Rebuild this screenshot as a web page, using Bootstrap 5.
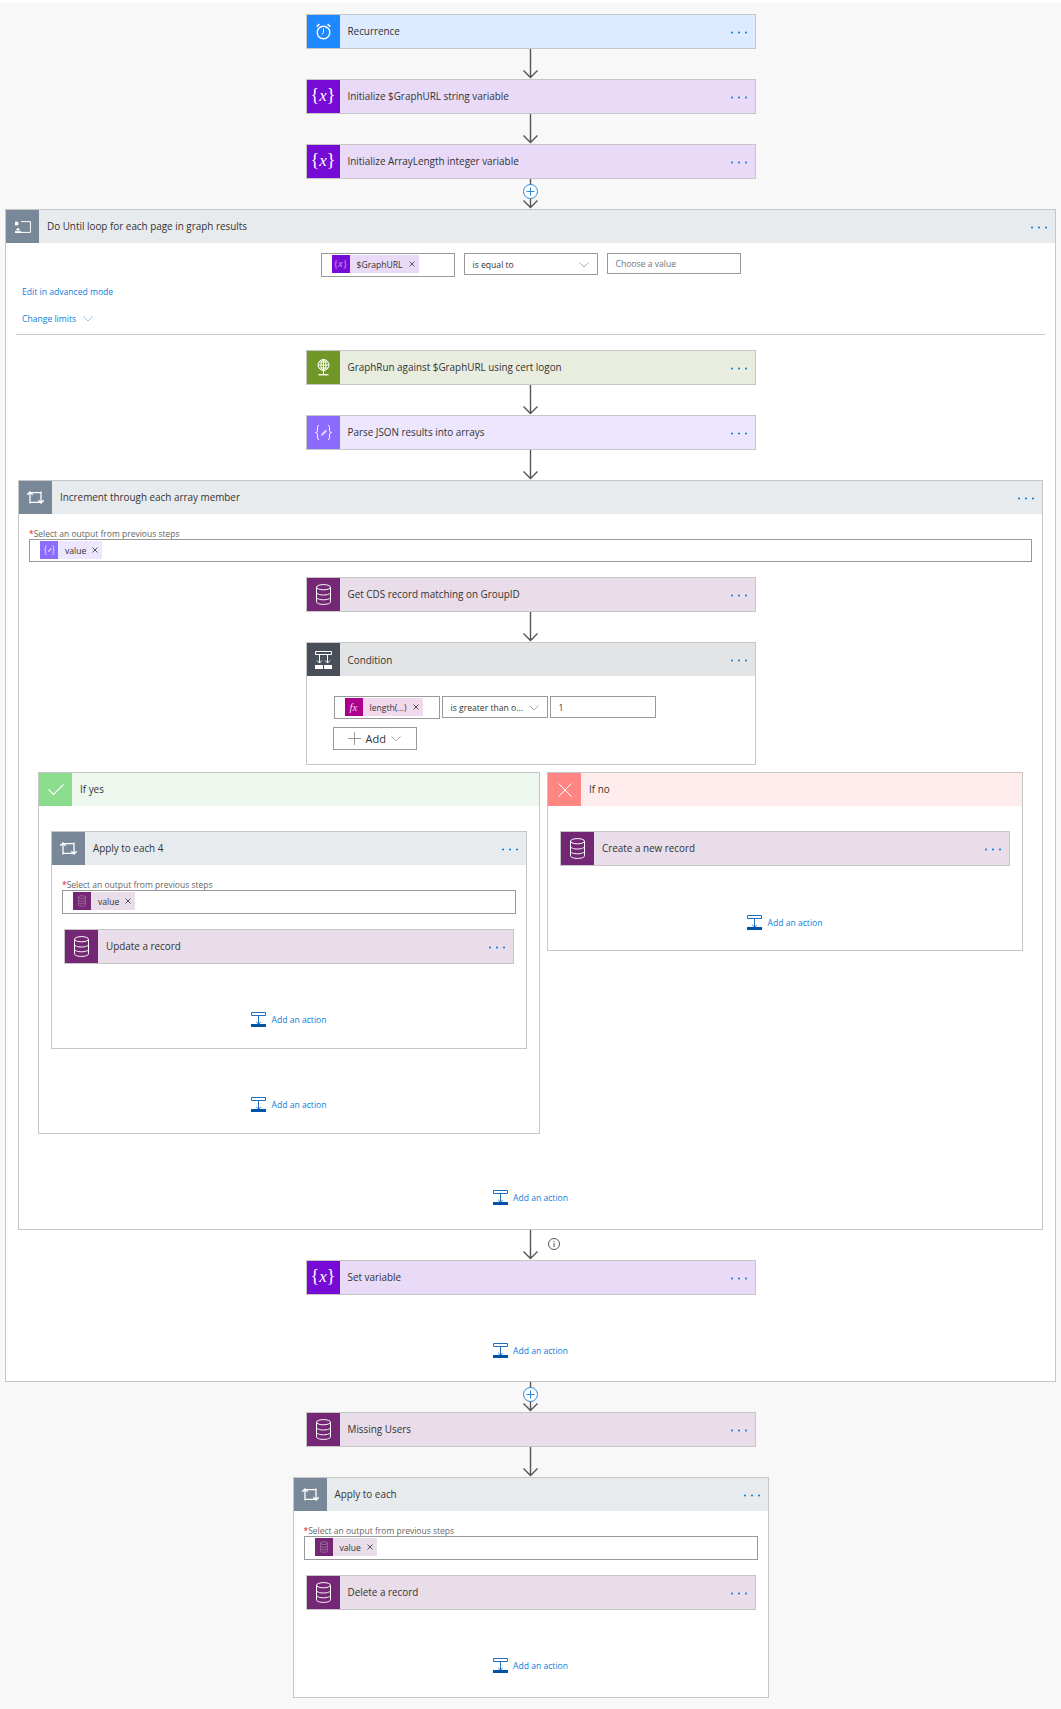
<!DOCTYPE html>
<html lang="en">
<head>
<meta charset="utf-8">
<title>Flow</title>
<link href="https://cdn.jsdelivr.net/npm/bootstrap@5.3.0/dist/css/bootstrap.min.css" rel="stylesheet">
<style>
body{background:#f8f8f8;border-top:2px solid #fff;padding:12px 0 11px;font-family:"Open Sans","Noto Sans",sans-serif;font-size:9.9px;color:#333;line-height:14px}
.fl-step,.fl-scope{--bs-card-border-color:#c6c6c6;--bs-card-bg:#fff;--bs-card-color:#333;--bs-card-cap-bg:transparent;--bs-card-border-radius:0;--bs-card-inner-border-radius:0}
.fl-step{width:450px;height:35px;flex:none}
.fl-ic{width:33px;height:33px;flex:none;background:var(--ic);color:#fff}
.fl-bar{background:var(--bg);height:33px;padding:0 7px 0 8px}
.fl-name{padding-bottom:1px;white-space:nowrap}
.fl-cnd .fl-name{padding:1px 0 0}
.fl-dots{width:17px;height:3px;margin:2px 1px 0 0}
.fl-step{background:var(--bg)}
.t-rec{--ic:#1e88ff;--bg:#dcebff}
.t-var{--ic:#770bd6;--bg:#e9daf7}
.t-web{--ic:#709727;--bg:#e8eddf}
.t-json{--ic:#8c6cff;--bg:#ece7ff}
.t-db{--ic:#742774;--bg:#e9dde9}
.t-loop{--ic:#788898;--bg:#e8ebee}
.t-cond{--ic:#484f58;--bg:#e3e4e6}
.t-yes{--ic:#8bdc8c;--bg:#edf7ee}
.t-no{--ic:#ff8683;--bg:#ffeded}
.t-fx{--ic:#ad008c;--bg:#f2d9ee}
.fl-brace{font-family:"Liberation Serif",serif;font-size:18px;line-height:31px;white-space:nowrap}
.fl-brace i{font-size:17px}
.fl-arrow{display:block;width:15px;height:30px;flex:none;overflow:visible}
.fl-conn{position:relative;height:30px;flex:none}
.fl-info{position:absolute;left:calc(50% + 17px);top:8px;width:12px;height:12px}
.fl-until{margin:0 5px;height:1173px}
.fl-tile{width:134px}
.fl-box{border:1px solid #999;background:#fff;height:22px;padding:1px 8px 0;font-size:8.6px;white-space:nowrap}
.fl-box.fl-tall{height:24px;padding:1px 0 0 10px}
.fl-box.fl-h23{height:23px}
.fl-chev{width:10px;height:6px;flex:none;color:#aaa}
.fl-chip{height:18px;background:var(--bg);padding-right:4px;font-size:8.6px}
.fl-chip .fl-mini{width:18px;height:18px;background:var(--ic);color:#fff}
.fl-chip .fl-tx{padding:1px 6px 0 7px}
.fl-chip .fl-brace{font-size:10px;line-height:18px;color:#c9a6f0}
.fl-chip .fl-brace i{font-size:10px}
.fl-chip .fl-fx{font-size:11px;line-height:18px;color:#f0d6ea}
.fl-chip .fl-fx i{font-size:11px}
.fl-x{width:6px;height:6px}
.fl-link{color:#0a80dc;text-decoration:none}
.fl-lite{color:#8fc3ec}
.fl-links{padding-left:16px;font-size:8.6px}
.fl-rule{height:1px;background:#c8c8c8;margin:8px 10px 15px}
.fl-inc{margin:0 12px;height:750px}
.fl-lab{height:12px;line-height:12px;color:#666;font-size:8.5px;margin-top:14px}
.fl-lab b{color:#e81123;font-weight:400}
.fl-cnd{width:450px;height:123px}
.fl-cbox{width:106px}
.fl-cbox.fl-tall{height:23px;padding:1px 0 0 10px}
.fl-add{width:84px;height:23px;border:1px solid #999;border-radius:0;background:#fff;color:#333;font-size:11px;margin:8px 0 0 -1px;padding:0 0 0 14px;line-height:20px;gap:5px}
.fl-yes{width:502px;height:362px}
.fl-no{width:476px;height:179px}
.fl-branch{gap:7px;margin:7px 19px 0}
.fl-w476{width:476px}
.fl-a4{height:218px;margin-top:25px}
.fl-act{height:15px;gap:5px;font-size:8.6px}
.fl-act svg{width:15px;height:15px}
.fl-final{width:476px;height:221px}
.fl-mx10{margin-left:10px;margin-right:10px}
.fl-mt15{margin-top:15px}
.fl-mt25{margin-top:25px}
.fl-mt48{margin-top:48px}
.fl-mt49{margin-top:49px}
.fl-mt56{margin-top:56px}
.fl-pt10{padding-top:10px}
.fl-pt20{padding:20px 0 0 27px}
.fl-gap9{gap:9px}
.fl-gap2{gap:2px}
.fl-h21{height:21px}
.fl-l{margin-top:8px}
.fl-l2{margin-top:13px}
.fl-low{margin-top:-1px}
.fl-lead{gap:7px}
</style>
</head>
<body>
<svg width="0" height="0" class="d-block position-absolute" aria-hidden="true">
<symbol id="i-dots" viewBox="0 0 17 3"><circle cx="2" cy="1.5" r="1" fill="#0078d4"/><circle cx="9" cy="1.5" r="1" fill="#0078d4"/><circle cx="16" cy="1.5" r="1" fill="#0078d4"/></symbol>
<symbol id="i-arrow" viewBox="0 0 15 30"><path d="M7.5 0V29M.5 21.5l7 7 7-7" fill="none" stroke="#555" stroke-width="1.4"/></symbol>
<symbol id="i-plus" viewBox="0 0 15 30"><path d="M7.5 0V29M.5 21.5l7 7 7-7" fill="none" stroke="#555" stroke-width="1.4"/><circle cx="7.5" cy="12.5" r="7" fill="#fff" stroke="#2b88d8"/><path d="M7.5 8.5v8M3.5 12.5h8" stroke="#2b88d8"/></symbol>
<symbol id="i-clock" viewBox="0 0 15 17"><circle cx="7.5" cy="9.5" r="6.3" fill="none" stroke="#fff" stroke-width="1.4"/><path d="M7.5 5.5v4l-1.5 2" fill="none" stroke="#fff"/><path d="M.8 3.6 3.4 1M14.2 3.6 11.6 1" stroke="#fff" stroke-width="1.6"/></symbol>
<symbol id="i-db" viewBox="0 0 15 21"><g fill="none" stroke="currentColor" stroke-width="1"><ellipse cx="7.5" cy="3.2" rx="7" ry="2.6"/><path d="M.5 3.2v14.6c0 1.5 3.1 2.6 7 2.6s7-1.1 7-2.6V3.2M.5 8.4c0 1.5 3.1 2.6 7 2.6s7-1.1 7-2.6M.5 13.2c0 1.5 3.1 2.6 7 2.6s7-1.1 7-2.6"/></g></symbol>
<symbol id="i-loop" viewBox="0 0 17 13"><g fill="none" stroke="#fff" stroke-width="1.3"><path d="M3 12.500V1M.3 3.700 3 1l2.700 2.700M14 .5V12M11.300 9.300 14 12l2.700-2.700"/><path d="M3 1.700h11M3 11.300h11"/></g></symbol>
<symbol id="i-until" viewBox="0 0 16 12"><path d="M6 .6h9.4v10.800H6" fill="none" stroke="#fff"/><path d="M0 1h3v3H0zM3 12V7.500M.8 9.200 3 7l2.200 2.200M0 10.500h6v1.500H0z" fill="#fff" stroke="#fff" stroke-width=".6"/></symbol>
<symbol id="i-globe" viewBox="0 0 13 17"><g fill="none" stroke="#fff"><circle cx="6.5" cy="6" r="5.5"/><ellipse cx="6.5" cy="6" rx="2.5" ry="5.5"/><path d="M1 6h11M2 3h9M2 9h9M6.5 .5v11M6.5 11.5V15"/></g><path d="M1.500 15h10v1.400h-10z" fill="#fff"/></symbol>
<symbol id="i-json" viewBox="0 0 17 15"><path d="M4 .5C2 .5 2.500 2 2.500 4.500S2 7 .5 7.500C2 8 2.500 8 2.500 10.500S2 14.500 4 14.500M13 .5c2 0 1.500 1.500 1.500 4S15 7 16.500 7.500C15 8 14.500 8 14.500 10.500s.5 4-1.500 4" fill="none" stroke="#fff"/><path d="M6 11l.6-2.400 4-4.100 1.600 1.600-4 4.100z" fill="#d9ceff"/></symbol>
<symbol id="i-cond" viewBox="0 0 17 18"><path d="M.5 .5h16v3H.5z" fill="none" stroke="#fff"/><path d="M4.500 4v8M2 9.500 4.500 12 7 9.500M12.500 4v8M10 9.500l2.500 2.500L15 9.500" fill="none" stroke="#fff"/><path d="M0 14h8v4H0zM9 14h8v4H9z" fill="#fff"/></symbol>
<symbol id="i-check" viewBox="0 0 16 11"><path d="M.5 5.500 5.500 10.500 15.500 .5" fill="none" stroke="#fff" stroke-width="1.100"/></symbol>
<symbol id="i-cross" viewBox="0 0 14 14"><path d="M.5 .5l13 13M13.500 .5l-13 13" fill="none" stroke="#fff" stroke-width="1"/></symbol>
<symbol id="i-chev" viewBox="0 0 10 6"><path d="M.5 .5 5 5 9.500 .5" fill="none" stroke="currentColor"/></symbol>
<symbol id="i-x" viewBox="0 0 6 6"><path d="M.5 .5l5 5M5.500 .5l-5 5" fill="none" stroke="#555" stroke-width="1"/></symbol>
<symbol id="i-act" viewBox="0 0 15 15"><path d="M.5 .5h14v3H.5z" fill="none" stroke="#1e6fc0"/><path d="M7.500 4v8M5.300 10l2.200 2.200L9.700 10" fill="none" stroke="#1e6fc0"/><path d="M0 12h15v3H0z" fill="#0053a6"/></symbol>
<symbol id="i-info" viewBox="0 0 12 12"><circle cx="6" cy="6" r="5.500" fill="none" stroke="#555"/><path d="M6 5v4M6 3v1.200" stroke="#555"/></symbol>
</svg>

<main class="d-flex flex-column align-items-center">
  <div class="card flex-row fl-step t-rec"><div class="fl-ic d-flex align-items-center justify-content-center"><svg width="15" height="17"><use href="#i-clock"/></svg></div><div class="fl-bar d-flex flex-grow-1 align-items-center justify-content-between"><span class="fl-name">Recurrence</span><svg class="fl-dots"><use href="#i-dots"/></svg></div></div>
  <svg class="fl-arrow"><use href="#i-arrow"/></svg>
  <div class="card flex-row fl-step t-var"><div class="fl-ic fl-brace text-center">{<i>x</i>}</div><div class="fl-bar d-flex flex-grow-1 align-items-center justify-content-between"><span class="fl-name">Initialize $GraphURL string variable</span><svg class="fl-dots"><use href="#i-dots"/></svg></div></div>
  <svg class="fl-arrow"><use href="#i-arrow"/></svg>
  <div class="card flex-row fl-step t-var"><div class="fl-ic fl-brace text-center">{<i>x</i>}</div><div class="fl-bar d-flex flex-grow-1 align-items-center justify-content-between"><span class="fl-name">Initialize ArrayLength integer variable</span><svg class="fl-dots"><use href="#i-dots"/></svg></div></div>
  <svg class="fl-arrow"><use href="#i-plus"/></svg>

  <section class="card fl-scope fl-until align-self-stretch t-loop">
    <div class="card-header d-flex p-0 border-0 rounded-0"><div class="fl-ic d-flex align-items-center justify-content-center"><svg width="16" height="12"><use href="#i-until"/></svg></div><div class="fl-bar d-flex flex-grow-1 align-items-center justify-content-between"><span class="fl-name">Do Until loop for each page in graph results</span><svg class="fl-dots"><use href="#i-dots"/></svg></div></div>
    <div class="card-body p-0 d-flex flex-column">
      <div class="d-flex justify-content-center align-items-start fl-gap9 fl-pt10">
        <div class="fl-box fl-tall fl-tile d-flex align-items-start"><span class="fl-chip d-inline-flex align-items-center t-var"><span class="fl-mini fl-brace text-center">{<i>x</i>}</span><span class="fl-tx">$GraphURL</span><svg class="fl-x"><use href="#i-x"/></svg></span></div>
        <div class="fl-box fl-tile d-flex align-items-center justify-content-between"><span>is equal to</span><svg class="fl-chev"><use href="#i-chev"/></svg></div>
        <div class="fl-box fl-tile fl-h21 d-flex align-items-center text-secondary"><span>Choose a value</span></div>
      </div>
      <div class="fl-links fl-l"><a class="fl-link" href="#">Edit in advanced mode</a></div>
      <div class="fl-links fl-l2 d-flex align-items-center fl-lead"><a class="fl-link" href="#">Change limits</a><svg class="fl-chev fl-lite"><use href="#i-chev"/></svg></div>
      <div class="fl-rule"></div>

      <div class="d-flex flex-column align-items-center">
        <div class="card flex-row fl-step t-web"><div class="fl-ic d-flex align-items-center justify-content-center"><svg width="13" height="17"><use href="#i-globe"/></svg></div><div class="fl-bar d-flex flex-grow-1 align-items-center justify-content-between"><span class="fl-name">GraphRun against $GraphURL using cert logon</span><svg class="fl-dots"><use href="#i-dots"/></svg></div></div>
        <svg class="fl-arrow"><use href="#i-arrow"/></svg>
        <div class="card flex-row fl-step t-json"><div class="fl-ic d-flex align-items-center justify-content-center"><svg width="17" height="15"><use href="#i-json"/></svg></div><div class="fl-bar d-flex flex-grow-1 align-items-center justify-content-between"><span class="fl-name">Parse JSON results into arrays</span><svg class="fl-dots"><use href="#i-dots"/></svg></div></div>
        <svg class="fl-arrow"><use href="#i-arrow"/></svg>

        <section class="card fl-scope fl-inc align-self-stretch t-loop">
          <div class="card-header d-flex p-0 border-0 rounded-0"><div class="fl-ic d-flex align-items-center justify-content-center"><svg width="17" height="13"><use href="#i-loop"/></svg></div><div class="fl-bar d-flex flex-grow-1 align-items-center justify-content-between"><span class="fl-name">Increment through each array member</span><svg class="fl-dots"><use href="#i-dots"/></svg></div></div>
          <div class="card-body p-0 d-flex flex-column">
            <div class="fl-lab fl-mx10"><b>*</b>Select an output from previous steps</div>
            <div class="fl-box fl-tall fl-h23 fl-mx10 fl-low d-flex align-items-start"><span class="fl-chip d-inline-flex align-items-center t-json"><span class="fl-mini d-flex align-items-center justify-content-center"><svg width="11" height="10"><use href="#i-json"/></svg></span><span class="fl-tx">value</span><svg class="fl-x"><use href="#i-x"/></svg></span></div>
            <div class="d-flex flex-column align-items-center fl-mt15">
              <div class="card flex-row fl-step t-db"><div class="fl-ic d-flex align-items-center justify-content-center"><svg width="15" height="21"><use href="#i-db"/></svg></div><div class="fl-bar d-flex flex-grow-1 align-items-center justify-content-between"><span class="fl-name">Get CDS record matching on GroupID</span><svg class="fl-dots"><use href="#i-dots"/></svg></div></div>
              <svg class="fl-arrow"><use href="#i-arrow"/></svg>
              <section class="card fl-scope fl-cnd t-cond">
                <div class="card-header d-flex p-0 border-0 rounded-0"><div class="fl-ic d-flex align-items-center justify-content-center"><svg width="17" height="18"><use href="#i-cond"/></svg></div><div class="fl-bar d-flex flex-grow-1 align-items-center justify-content-between"><span class="fl-name">Condition</span><svg class="fl-dots"><use href="#i-dots"/></svg></div></div>
                <div class="card-body fl-pt20">
                  <div class="d-flex fl-gap2 align-items-start">
                    <div class="fl-box fl-tall fl-cbox d-flex align-items-start"><span class="fl-chip d-inline-flex align-items-center t-fx"><span class="fl-mini fl-brace fl-fx text-center"><i>fx</i></span><span class="fl-tx">length(...)</span><svg class="fl-x"><use href="#i-x"/></svg></span></div>
                    <div class="fl-box fl-cbox d-flex align-items-center justify-content-between"><span>is greater than o...</span><svg class="fl-chev"><use href="#i-chev"/></svg></div>
                    <div class="fl-box fl-cbox d-flex align-items-center"><span>1</span></div>
                  </div>
                  <button type="button" class="btn fl-add d-flex align-items-center"><svg width="13" height="13"><path d="M6.500 0v13M0 6.500h13" stroke="#999"/></svg><span>Add</span><svg class="fl-chev"><use href="#i-chev"/></svg></button>
                </div>
              </section>
            </div>
            <div class="d-flex align-items-start fl-branch">
              <section class="card fl-scope fl-yes t-yes">
                <div class="card-header d-flex p-0 border-0 rounded-0"><div class="fl-ic d-flex align-items-center justify-content-center"><svg width="16" height="11"><use href="#i-check"/></svg></div><div class="fl-bar d-flex flex-grow-1 align-items-center"><span class="fl-name">If yes</span></div></div>
                <div class="card-body p-0 d-flex flex-column align-items-center">
                  <section class="card fl-scope fl-w476 fl-a4 t-loop">
                    <div class="card-header d-flex p-0 border-0 rounded-0"><div class="fl-ic d-flex align-items-center justify-content-center"><svg width="17" height="13"><use href="#i-loop"/></svg></div><div class="fl-bar d-flex flex-grow-1 align-items-center justify-content-between"><span class="fl-name">Apply to each 4</span><svg class="fl-dots"><use href="#i-dots"/></svg></div></div>
                    <div class="card-body p-0 d-flex flex-column align-items-stretch">
                      <div class="fl-lab fl-mx10"><b>*</b>Select an output from previous steps</div>
                      <div class="fl-box fl-tall fl-mx10 fl-low d-flex align-items-start"><span class="fl-chip d-inline-flex align-items-center t-db"><span class="fl-mini d-flex align-items-center justify-content-center"><svg width="8" height="12" class="text-white-50"><use href="#i-db"/></svg></span><span class="fl-tx">value</span><svg class="fl-x"><use href="#i-x"/></svg></span></div>
                      <div class="d-flex flex-column align-items-center fl-mt15">
                        <div class="card flex-row fl-step t-db"><div class="fl-ic d-flex align-items-center justify-content-center"><svg width="15" height="21"><use href="#i-db"/></svg></div><div class="fl-bar d-flex flex-grow-1 align-items-center justify-content-between"><span class="fl-name">Update a record</span><svg class="fl-dots"><use href="#i-dots"/></svg></div></div>
                        <div class="fl-act d-flex align-items-center fl-mt48"><svg><use href="#i-act"/></svg><a class="fl-link" href="#">Add an action</a></div>
                      </div>
                    </div>
                  </section>
                  <div class="fl-act d-flex align-items-center fl-mt48"><svg><use href="#i-act"/></svg><a class="fl-link" href="#">Add an action</a></div>
                </div>
              </section>
              <section class="card fl-scope fl-no t-no">
                <div class="card-header d-flex p-0 border-0 rounded-0"><div class="fl-ic d-flex align-items-center justify-content-center"><svg width="14" height="14"><use href="#i-cross"/></svg></div><div class="fl-bar d-flex flex-grow-1 align-items-center"><span class="fl-name">If no</span></div></div>
                <div class="card-body p-0 d-flex flex-column align-items-center">
                  <div class="card flex-row fl-step t-db fl-mt25"><div class="fl-ic d-flex align-items-center justify-content-center"><svg width="15" height="21"><use href="#i-db"/></svg></div><div class="fl-bar d-flex flex-grow-1 align-items-center justify-content-between"><span class="fl-name">Create a new record</span><svg class="fl-dots"><use href="#i-dots"/></svg></div></div>
                  <div class="fl-act d-flex align-items-center fl-mt49"><svg><use href="#i-act"/></svg><a class="fl-link" href="#">Add an action</a></div>
                </div>
              </section>
            </div>
            <div class="fl-act d-flex align-items-center justify-content-center fl-mt56"><svg><use href="#i-act"/></svg><a class="fl-link" href="#">Add an action</a></div>
          </div>
        </section>

        <div class="fl-conn align-self-center"><svg class="fl-arrow"><use href="#i-arrow"/></svg><svg class="fl-info"><use href="#i-info"/></svg></div>
        <div class="card flex-row fl-step t-var"><div class="fl-ic fl-brace text-center">{<i>x</i>}</div><div class="fl-bar d-flex flex-grow-1 align-items-center justify-content-between"><span class="fl-name">Set variable</span><svg class="fl-dots"><use href="#i-dots"/></svg></div></div>
        <div class="fl-act d-flex align-items-center fl-mt48"><svg><use href="#i-act"/></svg><a class="fl-link" href="#">Add an action</a></div>
      </div>
    </div>
  </section>

  <svg class="fl-arrow"><use href="#i-plus"/></svg>
  <div class="card flex-row fl-step t-db"><div class="fl-ic d-flex align-items-center justify-content-center"><svg width="15" height="21"><use href="#i-db"/></svg></div><div class="fl-bar d-flex flex-grow-1 align-items-center justify-content-between"><span class="fl-name">Missing Users</span><svg class="fl-dots"><use href="#i-dots"/></svg></div></div>
  <svg class="fl-arrow"><use href="#i-arrow"/></svg>
  <section class="card fl-scope fl-final t-loop">
    <div class="card-header d-flex p-0 border-0 rounded-0"><div class="fl-ic d-flex align-items-center justify-content-center"><svg width="17" height="13"><use href="#i-loop"/></svg></div><div class="fl-bar d-flex flex-grow-1 align-items-center justify-content-between"><span class="fl-name">Apply to each</span><svg class="fl-dots"><use href="#i-dots"/></svg></div></div>
    <div class="card-body p-0 d-flex flex-column">
      <div class="fl-lab fl-mx10"><b>*</b>Select an output from previous steps</div>
      <div class="fl-box fl-tall fl-mx10 fl-low d-flex align-items-start"><span class="fl-chip d-inline-flex align-items-center t-db"><span class="fl-mini d-flex align-items-center justify-content-center"><svg width="8" height="12" class="text-white-50"><use href="#i-db"/></svg></span><span class="fl-tx">value</span><svg class="fl-x"><use href="#i-x"/></svg></span></div>
      <div class="d-flex flex-column align-items-center fl-mt15">
        <div class="card flex-row fl-step t-db"><div class="fl-ic d-flex align-items-center justify-content-center"><svg width="15" height="21"><use href="#i-db"/></svg></div><div class="fl-bar d-flex flex-grow-1 align-items-center justify-content-between"><span class="fl-name">Delete a record</span><svg class="fl-dots"><use href="#i-dots"/></svg></div></div>
        <div class="fl-act d-flex align-items-center fl-mt48"><svg><use href="#i-act"/></svg><a class="fl-link" href="#">Add an action</a></div>
      </div>
    </div>
  </section>
</main>
<script src="https://cdn.jsdelivr.net/npm/bootstrap@5.3.0/dist/js/bootstrap.bundle.min.js"></script>
</body>
</html>
